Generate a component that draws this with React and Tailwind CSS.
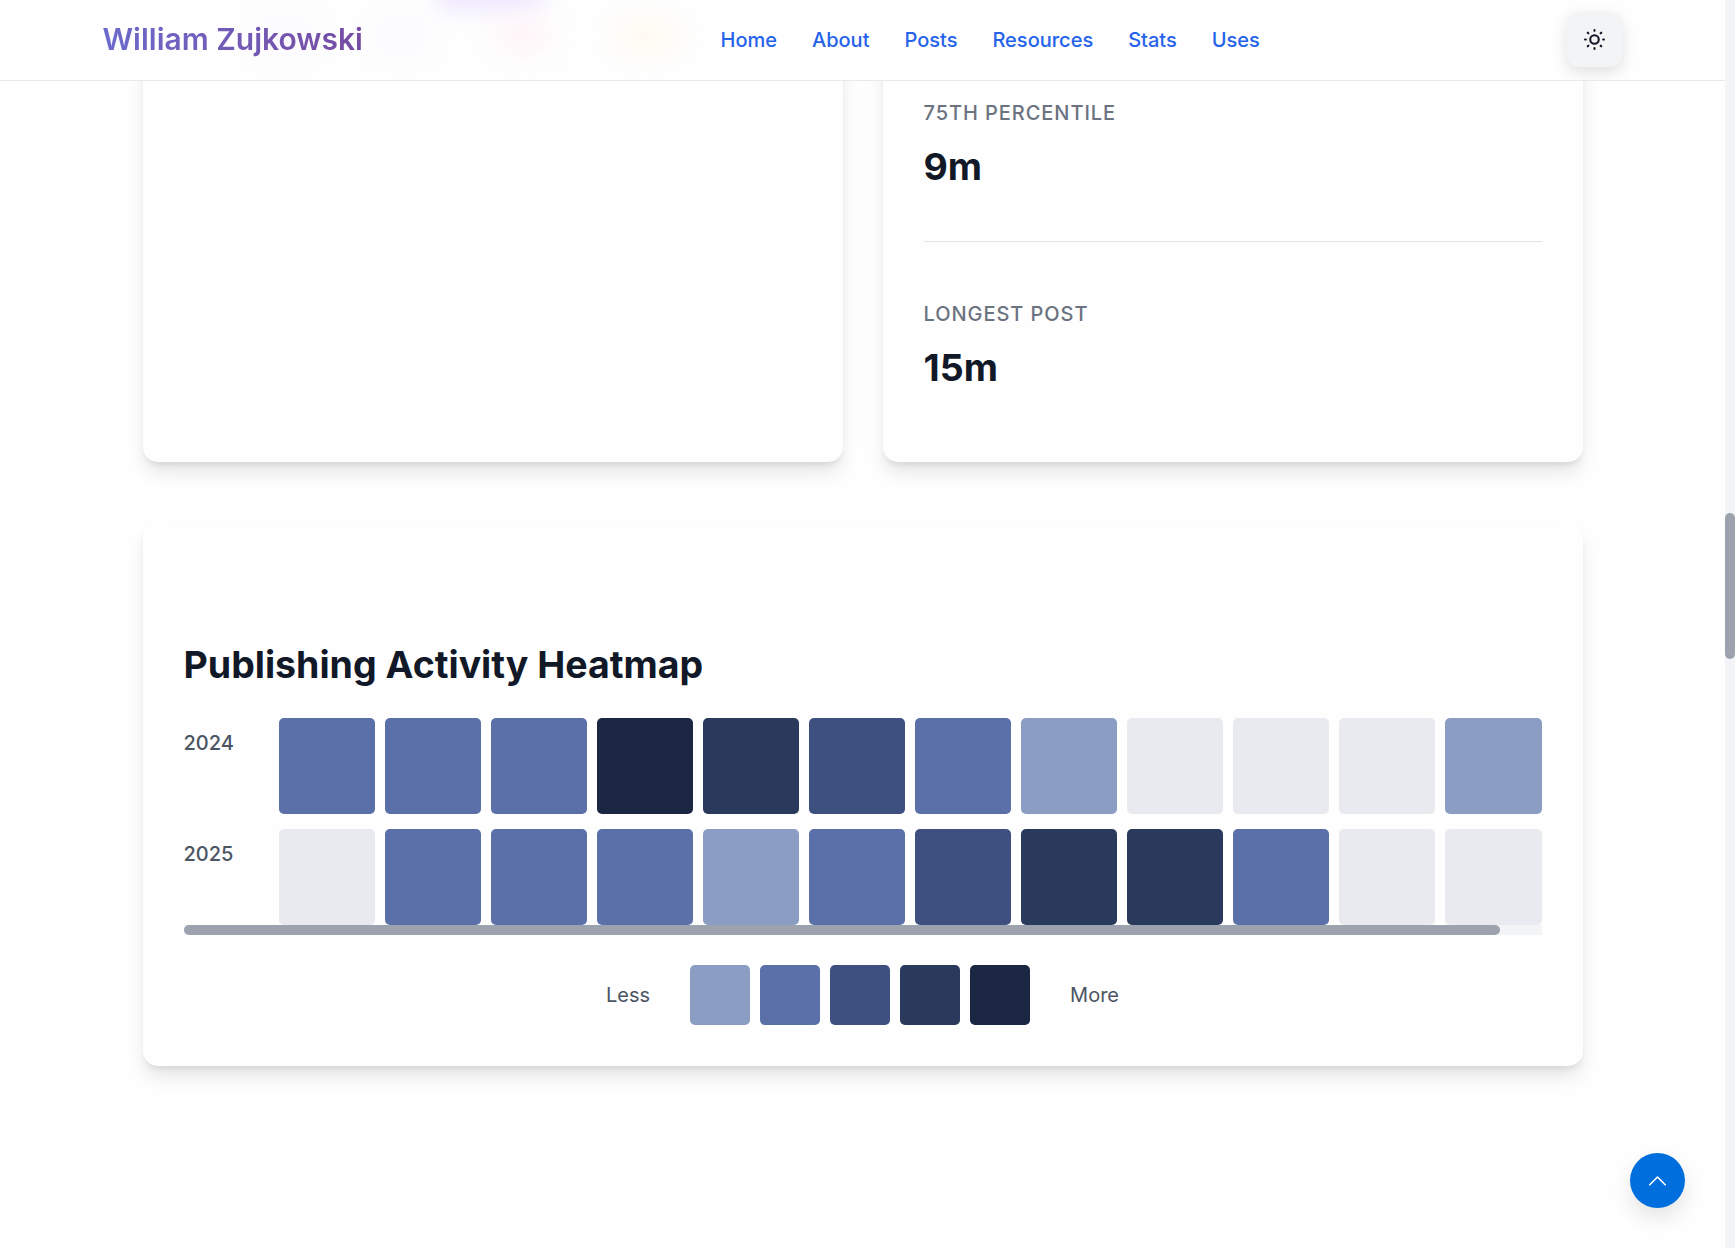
const LEVELS = ["bg-[#e8eaef]", "bg-[#8b9dc3]", "bg-[#5b70a8]", "bg-[#3d5080]", "bg-[#2a3a5c]", "bg-[#1a2642]"];

const YEARS = [
  { year: "2024", months: [2, 2, 2, 5, 4, 3, 2, 1, 0, 0, 0, 1] },
  { year: "2025", months: [0, 2, 2, 2, 1, 2, 3, 4, 4, 2, 0, 0] },
];

const NAV = ["Home", "About", "Posts", "Resources", "Stats", "Uses"];

const CARD = "rounded-[15px] bg-[#fefefe] shadow-[0_12.5px_18.75px_-3.75px_rgba(0,0,0,0.11),0_5px_7.5px_-3.75px_rgba(0,0,0,0.09)]";

function Header() {
  return (
    <header className="relative z-10 h-[81px] shrink-0 overflow-hidden border-b border-[#e8e8f0] bg-[#fefefe]">
      <div className="absolute top-[-26px] left-[435px] h-9 w-[110px] rounded-full bg-[#ede6ff] blur-[11px]" />
      <div className="absolute top-[18px] left-[255px] h-9 w-[60px] rounded-full bg-[#fbfaff] blur-[13px]" />
      <div className="absolute top-[22px] left-[375px] h-7 w-[52px] rounded-full bg-[#faf8ff] blur-[13px]" />
      <div className="absolute top-[18px] left-[497px] h-8 w-[52px] rounded-full bg-[#fff3f8] blur-[13px]" />
      <div className="absolute top-[20px] left-[614px] h-8 w-[64px] rounded-full bg-[#fffaf1] blur-[13px]" />
      <div className="relative mx-auto flex h-20 w-[1520px] items-center">
        <a className="w-[618px] -translate-y-px text-[30px] leading-[45px] font-semibold whitespace-nowrap">
          <span className="inline-block bg-gradient-to-r from-[#6b6acb] to-[#764ba2] bg-clip-text text-transparent">William Zujkowski</span>
        </a>
        <nav className="flex gap-[35px] text-[20px] leading-[30px] font-medium text-[#2563eb]">
          {NAV.map((item) => (
            <a key={item}>{item}</a>
          ))}
        </nav>
        <button className="mr-px ml-auto flex size-[55px] -translate-y-px items-center justify-center rounded-xl bg-[#f3f4f6] text-[#111827] shadow-[0_5px_15px_rgba(0,0,0,0.12)]">
          <svg className="size-[25px]" viewBox="0 0 24 24" fill="none" stroke="currentColor" strokeWidth="2" strokeLinecap="round">
            <circle cx="12" cy="12" r="4.1" />
            <path d="M12 2.9v.8M12 20.3v.8M2.9 12h.8M20.3 12h.8M5.5 5.5l.6.6M17.9 17.9l.6.6M5.5 18.5l.6-.6M17.9 6.1l.6-.6" />
          </svg>
        </button>
      </div>
    </header>
  );
}

function Metric({ label, value }) {
  return (
    <div>
      <div className="text-[20px] leading-[30px] font-medium tracking-[0.94px] text-[#6b7280]">{label}</div>
      <div className="mt-[10px] text-[37.5px] leading-[57px] font-bold text-[#111827]">{value}</div>
    </div>
  );
}

export default function App() {
  return (
    <div className="relative flex h-[1248px] w-[1735px] overflow-hidden bg-[#fefefe] font-[Inter,sans-serif]">
      <div className="flex w-[1725px] flex-col">
        <Header />
        <main className="mx-auto w-[1440px]">
          <div className="-mt-[31px] grid h-[412px] grid-cols-2 gap-10">
            <div className={CARD} />
            <div className={`${CARD} px-[41px] pt-[48px]`}>
              <Metric label="75TH PERCENTILE" value="9m" />
              <div className="mt-[46px] mb-[57px] h-px bg-[#e2e4e8]" />
              <Metric label="LONGEST POST" value="15m" />
            </div>
          </div>
          <section className={`${CARD} mt-[60px] h-[544px] px-[41px] pt-[114px]`}>
            <h2 className="text-[37.5px] leading-[57px] font-bold whitespace-nowrap text-[#111827]">Publishing Activity Heatmap</h2>
            <div className="mt-[25px] flex flex-col gap-[15px]">
              {YEARS.map(({ year, months }) => (
                <div key={year} className="flex">
                  <div className="w-[95px] pt-[10px] text-[20px] leading-[30px] font-medium text-[#4b5563]">{year}</div>
                  <div className="grid flex-1 grid-cols-12 gap-[10px]">
                    {months.map((level, i) => (
                      <div key={i} className={`h-24 rounded-[5px] ${LEVELS[level]}`} />
                    ))}
                  </div>
                </div>
              ))}
            </div>
            <div className="h-[10px] bg-[#f3f4f6]">
              <div className="h-[10px] w-[1316px] rounded-[5px] bg-[#9ca3af]" />
            </div>
            <div className="mt-[30px] flex items-center justify-center gap-10 text-[20px] leading-[30px] text-[#4b5563]">
              <span>Less</span>
              <div className="flex gap-[10px]">
                {LEVELS.slice(1).map((color) => (
                  <div key={color} className={`size-[60px] rounded-[5px] ${color}`} />
                ))}
              </div>
              <span>More</span>
            </div>
          </section>
        </main>
      </div>
      <div className="w-[10px] bg-[#f3f4f6] pt-[513px]">
        <div className="h-[146px] rounded-[5px] bg-[#9ca3af]" />
      </div>
      <button className="absolute right-[50px] bottom-10 flex size-[55px] items-center justify-center rounded-full bg-[#006edc] text-white shadow-[0_10px_20px_rgba(0,0,0,0.1)]">
        <svg className="h-[10px] w-[17px]" viewBox="0 0 17 10" fill="none" stroke="currentColor" strokeWidth="1.6" strokeLinecap="round" strokeLinejoin="round">
          <path d="M.8 8.8l7.7-7.8 7.7 7.8" />
        </svg>
      </button>
    </div>
  );
}
